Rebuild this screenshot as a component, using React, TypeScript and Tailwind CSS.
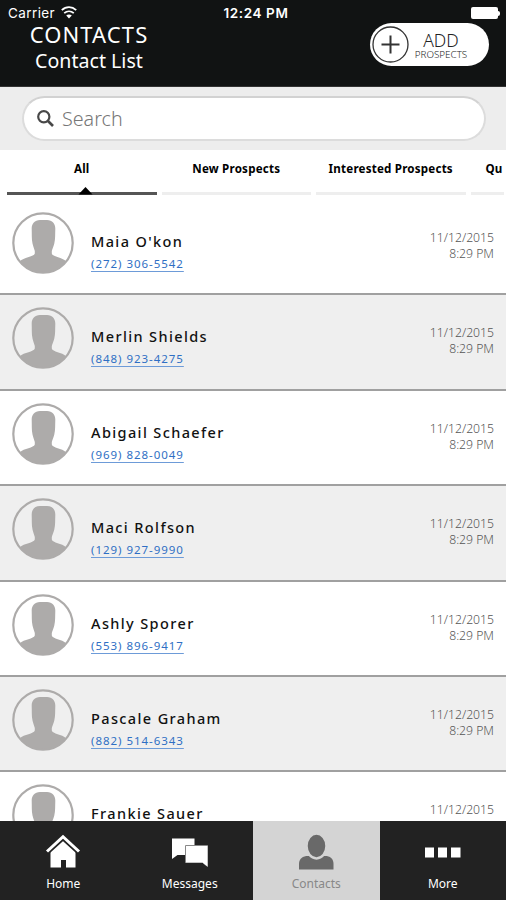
import React from "react";
import clsx from "clsx";

const contacts = [
  { name: "Maia O'kon", phone: "(272) 306-5542", time: "8:29 PM" },
  { name: "Merlin Shields", phone: "(848) 923-4275", time: "8:29 PM" },
  { name: "Abigail Schaefer", phone: "(969) 828-0049", time: "8:29 PM" },
  { name: "Maci Rolfson", phone: "(129) 927-9990", time: "8:29 PM" },
  { name: "Ashly Sporer", phone: "(553) 896-9417", time: "8:29 PM" },
  { name: "Pascale Graham", phone: "(882) 514-6343", time: "8:29 PM" },
  { name: "Frankie Sauer", phone: "", time: "" },
];

const tabs = ["All", "New Prospects", "Interested Prospects"];

const Avatar = () => (
  <svg viewBox="0 0 62 62" className="size-[62px] shrink-0">
    <path
      d="M28 8H35C40.500 8 43.500 12 43.300 17C43.100 22 43.400 27 42.300 31.500C41.500 34.500 40.300 37 39.800 39V41.500C40.500 45 50 45 54.300 49.500A30 30 0 0 1 7.700 49.500C12 45 21.800 45 22.800 41.500V39C22.300 37 21.300 34.500 20.500 31.500C19.500 27 19.900 22 19.700 17C19.500 12 22.500 8 28 8Z"
      fill="#adabaa"
    />
    <circle cx="31" cy="31" r="29.700" fill="none" stroke="#adabaa" strokeWidth="2.200" />
  </svg>
);

const StatusBar = () => (
  <div className="flex h-[26px] items-center justify-between pl-2 pr-[6px] font-['Inter',sans-serif] text-[13px]">
    <div className="flex w-[120px] items-center gap-[6px]">
      <span className="text-[13.500px] tracking-[0.400px]">Carrier</span>
      <svg width="16" height="13" viewBox="0 0 16 13" fill="none" stroke="#fff" strokeWidth="1.800" className="-mt-[2px]">
        <path d="M.8 4.200C5 .2 11 .2 15.200 4.200M3.200 7.200C6 4.700 10 4.700 12.800 7.200" />
        <path d="M5.200 9.600C6.800 8.200 9.200 8.200 10.800 9.600L8 12.400Z" fill="#fff" stroke="none" />
      </svg>
    </div>
    <span className="pl-[4px] text-[13.500px] font-semibold tracking-[0.600px]">12:24 PM</span>
    <div className="flex w-[120px] items-center justify-end">
      <div className="h-[12px] w-[27px] rounded-[2px] bg-white" />
      <div className="h-[5px] w-[2px] rounded-r bg-white" />
    </div>
  </div>
);

const Header = () => (
  <header className="h-[87px] shrink-0 border-b border-[#333] bg-[#111313] text-white">
    <StatusBar />
    <div className="flex justify-between pl-[28px] pr-[17px]">
      <div className="-mt-[5px] flex w-[122px] flex-col items-center">
        <h1 className="text-[22px] leading-[26px] tracking-[1.100px]">CONTACTS</h1>
        <p className="text-[19.600px] leading-[27px]">Contact List</p>
      </div>
      <button className="-mt-[3px] flex h-[43px] w-[119px] items-center rounded-full bg-white pl-[2px] text-[#222]">
        <svg width="37" height="37" viewBox="0 0 37 37" fill="none" stroke="#333">
          <circle cx="18.500" cy="18.500" r="17.500" strokeWidth="1.300" />
          <path d="M18.500 9.500V27.500M9.500 18.500H27.500" strokeWidth="2" />
        </svg>
        <span className="ml-[5px] flex w-[54px] flex-col items-center font-light">
          <span className="mt-[2px] text-[17.500px] leading-[18px]">ADD</span>
          <span className="text-[9.800px] leading-[12px]">PROSPECTS</span>
        </span>
      </button>
    </div>
  </header>
);

const SearchBar = () => (
  <div className="h-[63px] shrink-0 bg-[#ededed] pl-[22px] pr-[20px] pt-[9px]">
    <div className="flex h-[45px] items-center rounded-full border-2 border-[#dcdcdc] border-t-[#d2d2d2] bg-white pl-[13px]">
      <svg width="17" height="17" viewBox="0 0 17 17" fill="none" stroke="#484848">
        <circle cx="6.800" cy="6.800" r="5.600" strokeWidth="2.200" />
        <path d="M11 11L16 16" strokeWidth="2.700" />
      </svg>
      <span className="ml-[8px] text-[19.700px] font-light text-[#777]">Search</span>
    </div>
  </div>
);

const Tabs = () => (
  <div className="flex h-[49px] shrink-0 gap-[5px] overflow-hidden bg-white pl-[7px] text-[11.600px] font-bold text-black">
    {tabs.map((tab, i) => (
      <div key={tab} className="flex w-[149.500px] shrink-0 flex-col items-center">
        <span className="flex h-[37px] items-center tracking-[0.200px]">{tab}</span>
        {i === 0 ? (
          <svg width="150" height="8" viewBox="0 0 150 8" className="shrink-0">
            <path d="M0 5H150V8H0Z" fill="#555" />
            <path d="M71.500 7.500L78.500 0L85.500 7.500Z" fill="#000" />
          </svg>
        ) : (
          <div className="mt-[5px] h-[3px] w-full bg-[#eee]" />
        )}
      </div>
    ))}
    <div className="w-[33px] shrink-0">
      <span className="flex h-[37px] items-center pl-[15px]">Qu</span>
      <div className="mt-[5px] h-[3px] bg-[#eee]" />
    </div>
  </div>
);

const HomeIcon = () => (
  <svg width="36" height="36" viewBox="0 0 36 36" fill="#fff">
    <path d="M18 5.500L30.500 17.500V33.500H21V26H16V33.500H5.500V17.500Z" />
    <path d="M2 18L18 3.500L34 18" fill="none" stroke="#222" strokeWidth="5.500" />
    <path d="M2 17.500L18 2.700L34 17.500" fill="none" stroke="#fff" strokeWidth="3" />
  </svg>
);

const MessagesIcon = () => (
  <svg width="38" height="36" viewBox="0 0 38 36" fill="#fff">
    <path d="M1 4.500H23.500V21H6.500L1 25Z" />
    <path d="M14.500 11.500H36.500V32.500L31.500 28.500H14.500Z" stroke="#888" strokeWidth="1" />
    <path d="M15 12H36.500V32.500L31.500 28.500H15Z" />
  </svg>
);

const ContactsIcon = () => (
  <svg width="36" height="36" viewBox="0 0 36 36" fill="#696969">
    <path d="M1 35.500V30C1 24.500 5 22 10 22H27C32 22 35.500 24.500 35.500 30V35.500Z" />
    <ellipse cx="18.500" cy="12" rx="10" ry="12.500" stroke="#d4d4d4" strokeWidth="2.500" />
  </svg>
);

const MoreIcon = () => (
  <svg width="38" height="36" viewBox="0 0 38 36" fill="#fff">
    <path d="M1 13.500H10V23.500H1ZM14 13.500H23V23.500H14ZM27 13.500H36.500V23.500H27Z" />
  </svg>
);

const navItems = [
  { label: "Home", icon: <HomeIcon /> },
  { label: "Messages", icon: <MessagesIcon /> },
  { label: "Contacts", icon: <ContactsIcon />, active: true },
  { label: "More", icon: <MoreIcon /> },
];

export default function App() {
  return (
    <div className="flex h-[900px] w-[506px] flex-col overflow-hidden bg-white font-['Noto_Sans',sans-serif]">
      <Header />
      <SearchBar />
      <Tabs />

      {/* CONTACT LIST */}
      <div className="min-h-0 flex-1 overflow-hidden pt-[1px]">
        {contacts.map((contact, i) => (
          <div
            key={contact.name}
            className={clsx(
              "flex h-[95.400px] items-start border-b-2 border-[#a0a0a0] pl-[12px] pr-[12px] pt-[12px]",
              i % 2 === 1 ? "bg-[#efefef]" : "bg-white"
            )}
          >
            <Avatar />
            <div className="ml-[17px] mt-[19px] flex-1">
              <div className="text-[14.500px] font-medium leading-[20px] tracking-[1.380px] text-[#111]">{contact.name}</div>
              <div className="mt-[4px] text-[11.500px] leading-[17px] tracking-[0.960px] text-[#2f6fc4] underline decoration-[#6d9bd8] underline-offset-[3px]">
                {contact.phone}
              </div>
            </div>
            <div className="mt-[18px] text-right text-[12.200px] font-light leading-[16px] text-[#555]">
              <div>11/12/2015</div>
              <div>{contact.time}</div>
            </div>
          </div>
        ))}
      </div>

      {/* BOTTOM NAV */}
      <nav className="grid h-[79px] shrink-0 grid-cols-4 bg-[#222]">
        {navItems.map((item) => (
          <div
            key={item.label}
            className={clsx(
              "flex flex-col items-center pt-[13px] text-[12px]",
              item.active ? "bg-[#d4d4d4] text-[#888]" : "text-white"
            )}
          >
            {item.icon}
            <span className="mt-[5px] leading-[17px]">{item.label}</span>
          </div>
        ))}
      </nav>
    </div>
  );
}
